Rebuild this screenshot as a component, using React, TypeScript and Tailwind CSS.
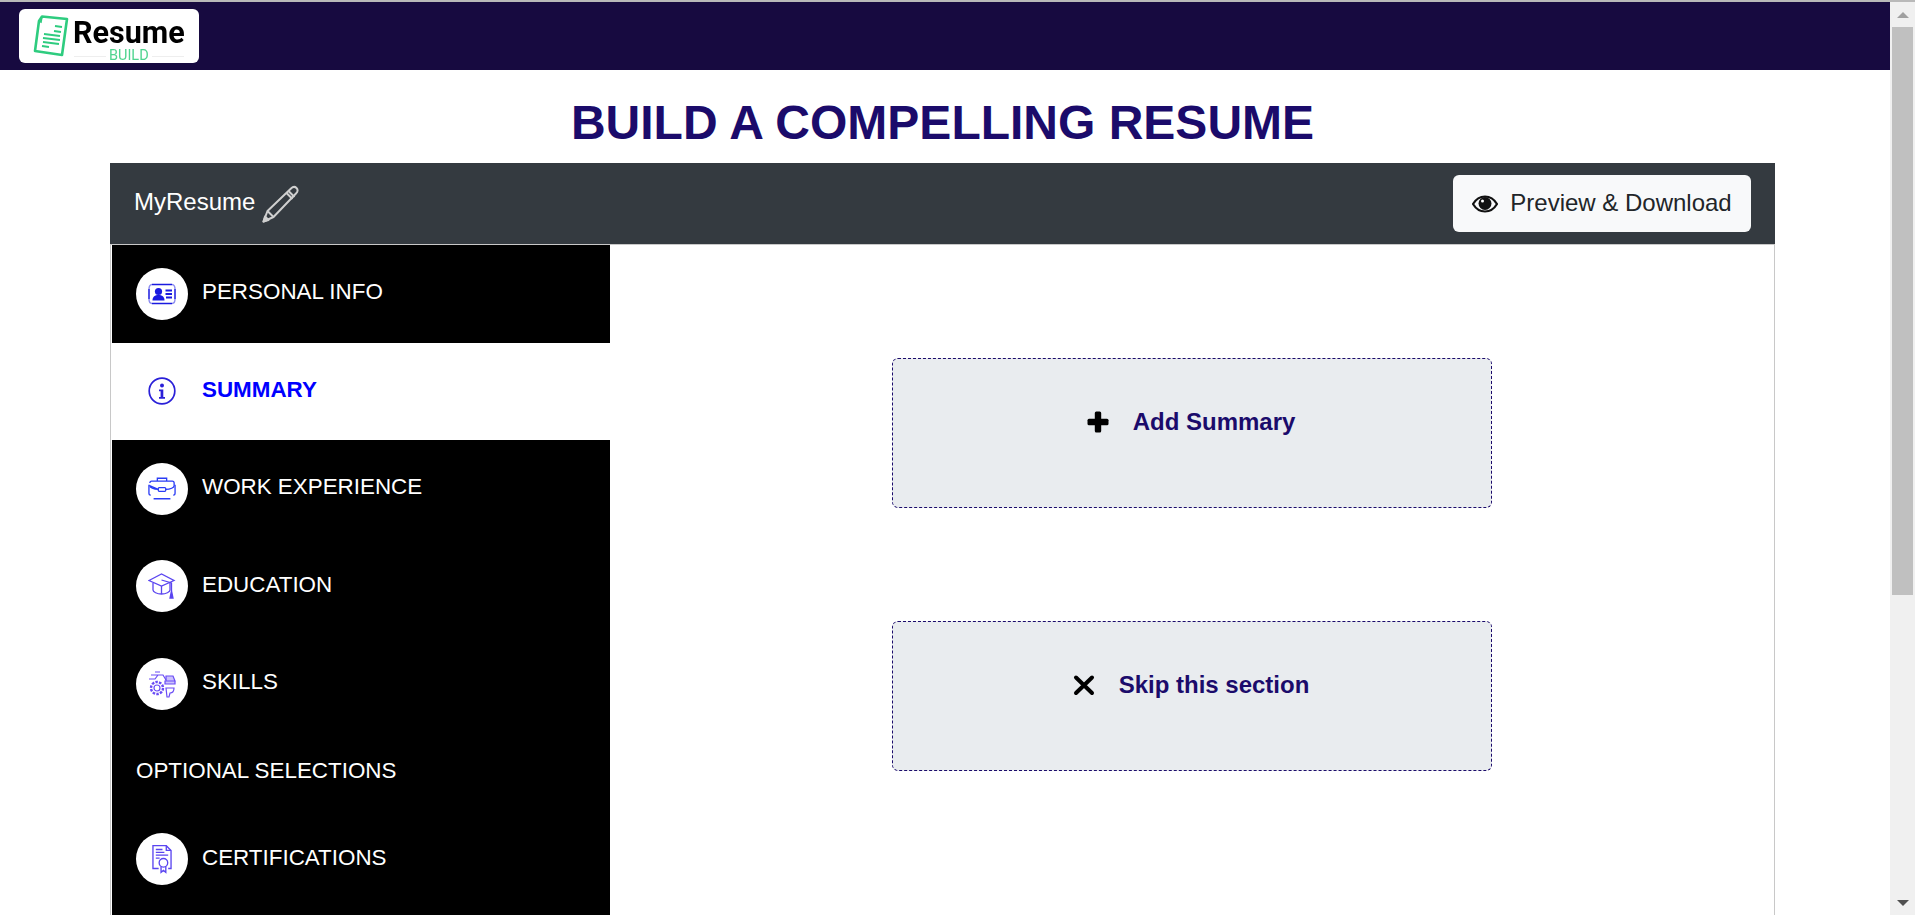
import React from 'react';

const Logo = () => (
  <div className="ml-[19px] w-[180px] h-[54px] bg-white rounded-[6px] flex items-start pl-[14px] pt-[5px] relative">
    <svg className="blur-[0.3px]" width="36" height="44" viewBox="0 0 36 44" fill="none" stroke="#2ecc7f" strokeWidth="2.6">
      <path d="M9 2.500 L34 5 L29 41 L2 37 L6 7 Z" strokeLinejoin="round" />
      <path d="M9 2.500 L8 8 L6 7" strokeWidth="1.6" />
      <path d="M22 12 L29 13 M21 17 L28 18 M11 20 L27 22 M10 24 L27 26 M10 28 L26 30 M9 32 L16 33" strokeWidth="2" />
    </svg>
    <div className="ml-[4px] flex flex-col items-center blur-[0.3px]">
      <span className="font-['Roboto',sans-serif] font-bold text-[30.500px] leading-[36px] mt-[1px] text-black">Resume</span>
      <div className="flex items-center gap-[3px] -mt-[2px]">
        <div className="w-[32px] h-px bg-[#eeeeee]" />
        <span className="font-['Roboto',sans-serif] text-[14.500px] leading-[14px] text-[#4fd48f]">BUILD</span>
        <div className="w-[32px] h-px bg-[#eeeeee]" />
      </div>
    </div>
  </div>
);

const PencilIcon = () => (
  <svg width="38" height="38" viewBox="0 0 38 38" fill="none" stroke="#cfcfcf" strokeWidth="2" strokeLinejoin="round">
    <path d="M1.500 36.500L5.500 26 29 3.500c2-2 4-2 5.500-.5s1.500 3.500-.5 5.500L11.500 32z" />
    <path d="M26.500 6l6 6M24.500 8l6 6M5.500 26l6 6" />
    <path d="M1.500 36.500L3 31.500 6.500 35z" fill="#cfcfcf" />
  </svg>
);

const PersonalIcon = () => (
  <svg width="28" height="24" viewBox="0 0 28 24" fill="none" stroke="#1a1ae0" strokeWidth="1.4">
    <path d="M4 2.500h20M4 21.500h20M1 7v10M27 7v10" strokeWidth="1.500" />
    <path d="M1 7c0-2.500 1-4.500 3-4.500M27 7c0-2.500-1-4.500-3-4.500M1 17c0 2.500 1 4.500 3 4.500M27 17c0 2.500-1 4.500-3 4.500" strokeOpacity="0.5" />
    <circle cx="10.500" cy="9.500" r="3.600" fill="#1a1ae0" stroke="none" />
    <path d="M4.500 18.500c0-4 2.500-5.500 6-5.500s6 1.500 6 5.500z" fill="#1a1ae0" stroke="none" />
    <path d="M17.500 8.500h6.500M17.500 12h6.500M18 15.500h6" strokeWidth="1.800" />
  </svg>
);

const InfoIcon = () => (
  <svg width="28" height="28" viewBox="0 0 28 28" fill="none">
    <circle cx="14" cy="14" r="12.800" stroke="#2a20d8" strokeWidth="1.700" />
    <circle cx="14" cy="8.500" r="2" fill="#2a20d8" />
    <path d="M11 12.500h4.300v7.500h1.700v1.700h-6v-1.700h1.600v-5.800h-1.600z" fill="#2a20d8" />
  </svg>
);

const WorkIcon = () => (
  <svg width="28" height="25" viewBox="0 0 30 26" fill="none" stroke="#2a3cf5" strokeWidth="1.400">
    <path d="M10 5V2h10v3" />
    <path d="M2 7c0-1 1-2 2-2h22c1 0 2 1 2 2v3c0 2-4 4-9 4M11 14c-5 0-9-2-9-4z" />
    <rect x="11" y="12" width="8" height="4" rx="1" />
    <path d="M1 9v9c0 1 1 2 2 2M29 9v9c0 1-1 2-2 2M6 24h18" />
  </svg>
);

const EducationIcon = () => (
  <svg width="28" height="28" viewBox="0 0 28 28" fill="none" stroke="#5a45f0" strokeWidth="1.300">
    <path d="M1 8.500L13.500 2 26 8.500 13.500 14z" />
    <path d="M5 11v7c0 2 4 4 8.500 4s8.500-2 8.500-4v-7" />
    <path d="M13.500 8l10 3v8" />
    <path d="M23.500 19l-1.500 7h3z" fill="#5a45f0" />
    <path d="M13.500 14v8" />
  </svg>
);

const SkillsIcon = () => (
  <svg width="28" height="28" viewBox="0 0 28 28" fill="none" stroke="#6a4cf5" strokeWidth="1.200">
    <circle cx="9" cy="18" r="3" />
    <circle cx="9" cy="18" r="6" strokeDasharray="2.500 1.200" strokeWidth="2.400" />
    <path d="M3 5h8M1 9h6l3-4h5l3 5M7 2h5" />
    <path d="M18 6h7l2 5H18zM17 11h10v3H17z" fill="#6a4cf5" fillOpacity="0.35" />
    <path d="M18 18h8c0 4-2 5-4 5l-1 4h-2z" />
  </svg>
);

const CertIcon = () => (
  <svg width="20" height="30" viewBox="0 0 21 30" fill="none" stroke="#5a45f0" strokeWidth="1.400">
    <path d="M7 25H1V1h14l5 5v19h-3" />
    <path d="M15 1v5h5" />
    <path d="M4 5h7M4 8h9M4 11h13M4 14h4" />
    <circle cx="12" cy="19" r="4.500" />
    <path d="M9.500 23v6l2.500-2 2.500 2v-6" />
  </svg>
);

const EyeIcon = () => (
  <svg width="26" height="18" viewBox="0 0 26 18">
    <path d="M1 9C4 4 8 1.500 13 1.500S22 4 25 9c-3 5-7 7.500-12 7.500S4 14 1 9z" fill="none" stroke="#111" strokeWidth="2.200" />
    <circle cx="13" cy="8.500" r="6.500" fill="#111" />
    <circle cx="10.500" cy="6" r="1.500" fill="#fff" />
  </svg>
);

const PlusIcon = () => (
  <svg width="22" height="22" viewBox="0 0 22 22" fill="#000">
    <rect x="7.800" y="0.500" width="6.400" height="21" rx="1.500" />
    <rect x="0.500" y="7.800" width="21" height="6.400" rx="1.500" />
  </svg>
);

const CrossIcon = () => (
  <svg width="22" height="22" viewBox="0 0 22 22" stroke="#000" strokeWidth="4" strokeLinecap="round">
    <path d="M3 3.500L19 19M19 3.500L3 19" />
  </svg>
);

const menu = [
  { label: 'PERSONAL INFO', icon: <PersonalIcon /> },
  { label: 'SUMMARY', icon: <InfoIcon />, active: true },
  { label: 'WORK EXPERIENCE', icon: <WorkIcon /> },
  { label: 'EDUCATION', icon: <EducationIcon /> },
  { label: 'SKILLS', icon: <SkillsIcon /> },
];

const MenuRow = ({ label, icon, active }: { label: string; icon: React.ReactNode; active?: boolean }) => (
  <div className={`h-[97.500px] flex items-center pl-[24px] ${active ? 'bg-white' : 'bg-black'}`}>
    <div className="w-[52px] h-[52px] rounded-full bg-white flex items-center justify-center shrink-0">{icon}</div>
    <span className={`ml-[14px] mb-[3px] text-[22.400px] ${active ? 'font-bold text-[#0000ff]' : 'text-white'}`}>{label}</span>
  </div>
);

const ActionBox = ({ icon, label }: { icon: React.ReactNode; label: string }) => (
  <div className="w-[600px] h-[150px] bg-[#e9ecef] border border-dashed border-[#1b0b6b] rounded-[6px] flex justify-center pt-[47px] pr-[2px]">
    <div className="flex items-center gap-[24px] h-[32px]">
      {icon}
      <span className="text-[24px] font-bold text-[#1b0b6b]">{label}</span>
    </div>
  </div>
);

export default function App() {
  return (
    <div className="h-[915px] flex flex-col overflow-hidden bg-white font-['Liberation_Sans',Arial,sans-serif]">
      <div className="h-[2px] bg-[#b9b9b9] shrink-0" />
      <div className="flex flex-1 min-h-0">
        <main className="flex-1 min-w-0 overflow-hidden">
          <header className="h-[68px] bg-[#170a40] pt-[7px]">
            <Logo />
          </header>
          <h1 className="text-center pr-[5px] text-[48px] leading-[55px] font-bold text-[#1b0b6b] mt-[25px] mb-[13px]">BUILD A COMPELLING RESUME</h1>
          <section className="mx-[110px] w-[1665px]">
            <div className="h-[81px] bg-[#343a40] flex items-center justify-between pl-[24px] pr-[24px]">
              <div className="flex items-center text-white text-[24px]">
                <span className="mb-[3px]">MyResume</span>
                <span className="ml-[7px]"><PencilIcon /></span>
              </div>
              <button className="w-[298px] h-[57px] bg-[#f8f9fa] rounded-[6px] flex items-center justify-center gap-[12px] text-[24px] text-[#212529]">
                <EyeIcon />
                <span className="mb-[1px]">Preview &amp; Download</span>
              </button>
            </div>
            <div className="flex border-x border-t border-[#c8c8c8] h-[700px]">
              <nav className="w-[498px] ml-px bg-black shrink-0">
                {menu.map(m => <MenuRow key={m.label} {...m} />)}
                <div className="h-[78px] flex items-center pl-[24px] pb-[2px] text-white text-[22.400px]">OPTIONAL SELECTIONS</div>
                <MenuRow label="CERTIFICATIONS" icon={<CertIcon />} />
              </nav>
              <div className="flex-1 flex flex-col items-center pt-[113px] gap-[113px]">
                <ActionBox icon={<PlusIcon />} label="Add Summary" />
                <ActionBox icon={<CrossIcon />} label="Skip this section" />
              </div>
            </div>
          </section>
        </main>
        <aside className="w-[25px] bg-[#f0f0f0] shrink-0 flex flex-col items-center">
          <div className="h-[25px] flex items-center justify-center">
            <div className="w-0 h-0 border-x-[6px] border-x-transparent border-b-[6px] border-b-[#a0a0a0]" />
          </div>
          <div className="w-[21px] h-[568px] bg-[#c0c0c0]" />
          <div className="flex-1" />
          <div className="h-[25px] flex items-center justify-center">
            <div className="w-0 h-0 border-x-[6px] border-x-transparent border-t-[6px] border-t-[#505050]" />
          </div>
        </aside>
      </div>
    </div>
  );
}
